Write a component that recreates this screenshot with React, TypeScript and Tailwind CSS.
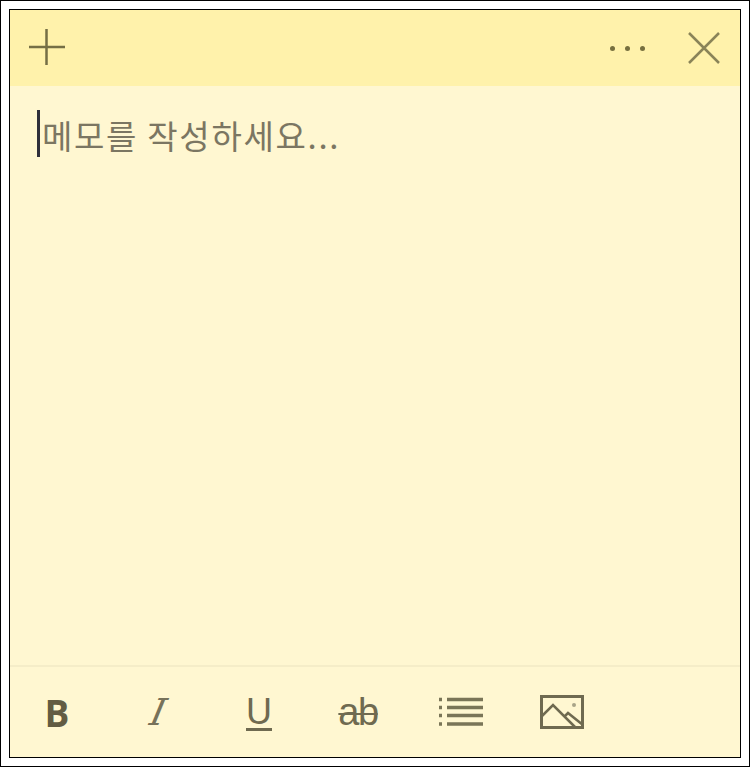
export default function App() {
  return (
    <div className="w-[750px] h-[767px] bg-white border border-black p-2 font-['Noto_Sans_CJK_KR',sans-serif]">
      <div className="w-full h-full border border-black bg-[#fff7d1] flex flex-col">
        {/* title bar */}
        <div className="h-[76px] shrink-0 bg-[#fff2ab] flex items-center justify-between pl-[18px] pr-[20px]">
          <svg width="38" height="38" viewBox="0 0 38 38">
            <path d="M18.500 0v36M1 18h36" stroke="#756f45" strokeWidth="2.500" fill="none" />
          </svg>
          <div className="flex items-center gap-[43px]">
            <div className="flex items-center gap-[10px]">
              <div className="w-[5px] h-[5px] rounded-full bg-[#77703f]" />
              <div className="w-[5px] h-[5px] rounded-full bg-[#77703f]" />
              <div className="w-[5px] h-[5px] rounded-full bg-[#77703f]" />
            </div>
            <svg width="32" height="32" viewBox="0 0 32 32">
              <path d="M1 1l30 30M31 1L1 31" stroke="#8a8458" strokeWidth="2.500" fill="none" />
            </svg>
          </div>
        </div>

        {/* note body */}
        <div className="flex-1 pt-[23px] pl-[27px]">
          <div className="flex items-center h-[48px]">
            <div className="w-[3px] h-[47px] bg-[#2f2f3a] shrink-0" />
            <span className="ml-[2px] mt-[4px] text-[33px] leading-[48px] tracking-[1.7px] text-[#7b7662] whitespace-nowrap">메모를 작성하세요...</span>
          </div>
        </div>

        {/* format toolbar */}
        <div className="h-[92px] shrink-0 border-t-2 border-[#f5edc8] flex items-center pl-[27px] gap-[61px] text-[#6f6a50] font-['Liberation_Sans',sans-serif]">
          <div className="w-[40px] text-center text-[37px] leading-none font-bold text-[#625c43] font-['Open_Sans',sans-serif]">B</div>
          <div className="w-[40px] flex justify-center">
            <span className="inline-block text-[37px] leading-none italic -skew-x-12 text-[#77725a] font-['DejaVu_Serif',serif]">I</span>
          </div>
          <div className="w-[40px] flex justify-center">
            <span className="text-[36px] leading-[38px] underline decoration-[3px] underline-offset-[4px]">U</span>
          </div>
          <div className="w-[40px] flex justify-center -translate-x-[2px]">
            <span className="text-[38px] leading-none tracking-[-1.5px] line-through decoration-2 whitespace-nowrap">ab</span>
          </div>
          <div className="w-[40px] flex justify-center">
            <svg width="46" height="30" viewBox="0 0 46 30" fill="none" stroke="#7a7557" className="shrink-0">
              <path d="M9 2.500h36M9 10.500h36M9 18.500h36M9 27h36" strokeWidth="3.500" />
              <path d="M1 2.500h3M1 10.500h3M1 18.500h3M1 27h3" strokeWidth="3.500" />
            </svg>
          </div>
          <div className="w-[40px] flex justify-center">
            <svg width="44" height="34" viewBox="0 0 44 34" fill="none" stroke="#6f6a50" className="shrink-0">
              <rect x="1.500" y="1.500" width="41" height="31" strokeWidth="3" />
              <path d="M2 21l11-11 22 22M25 21l3-3 15 12" strokeWidth="2.500" />
              <circle cx="34" cy="10" r="2" fill="#a9a488" stroke="none" />
            </svg>
          </div>
        </div>
      </div>
    </div>
  );
}
